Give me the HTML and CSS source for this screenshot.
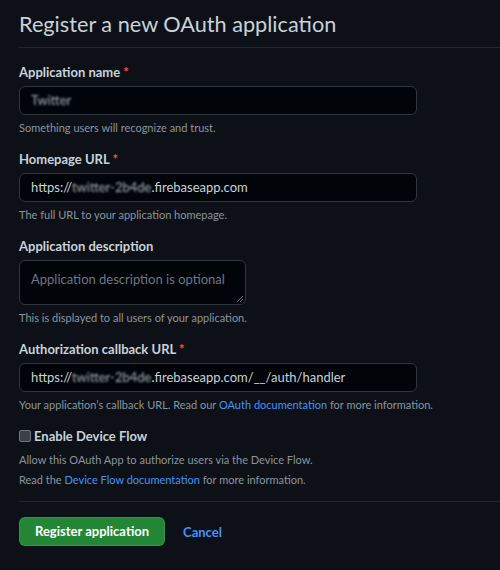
FILE: index.html
```html
<!DOCTYPE html>
<html>
<head>
<meta charset="utf-8">
<link rel="stylesheet" href="styles.css">
</head>
<body>
<div class="page">
  <h1 class="title">Register a new OAuth application</h1>
  <form class="form">
    <div class="group">
      <label class="label">Application name <span class="req">*</span></label>
      <div class="input wide"><span class="blur">Twitter</span></div>
      <p class="note">Something users will recognize and trust.</p>
    </div>
    <div class="group">
      <label class="label">Homepage URL <span class="req">*</span></label>
      <div class="input wide">https://<span class="blur">twitter-2b4de</span>.firebaseapp.com</div>
      <p class="note">The full URL to your application homepage.</p>
    </div>
    <div class="group">
      <label class="label">Application description</label>
      <div class="input textarea"><span class="placeholder">Application description is optional</span><span class="grip"></span></div>
      <p class="note">This is displayed to all users of your application.</p>
    </div>
    <div class="group">
      <label class="label">Authorization callback URL <span class="req">*</span></label>
      <div class="input wide">https://<span class="blur">twitter-2b4de</span>.firebaseapp.com/__/auth/handler</div>
      <p class="note">Your application’s callback URL. Read our <a class="link">OAuth documentation</a> for more information.</p>
    </div>
    <div class="group device">
      <label class="check"><span class="box"></span>Enable Device Flow</label>
      <p class="note first">Allow this OAuth App to authorize users via the Device Flow.</p>
      <p class="note">Read the <a class="link">Device Flow documentation</a> for more information.</p>
    </div>
    <div class="actions">
      <span class="btn">Register application</span>
      <a class="cancel">Cancel</a>
    </div>
  </form>
</div>
</body>
</html>
```

FILE: styles.css
```css
html, body {
  margin: 0;
  padding: 0;
  background: #0d1117;
}
body {
  font-family: Lato, "Noto Sans", sans-serif;
  color: #c9d1d9;
}
.page {
  padding: 8px 0 0 19px;
}
.title {
  margin: 0;
  font-weight: 400;
  font-size: 21.7px;
  line-height: 32px;
  color: #c9d1d9;
  padding-bottom: 7px;
  border-bottom: 1px solid #21262d;
}
.form {
  padding-top: 14px;
}
.group {
  margin-bottom: 13px;
}
.label {
  display: block;
  font-size: 13px;
  font-weight: 700;
  line-height: 20px;
  margin-bottom: 4px;
}
.req {
  color: #f85149;
}
.input {
  box-sizing: border-box;
  background: #010409;
  border: 1px solid #30363d;
  border-radius: 6px;
  font-size: 13px;
  line-height: 20px;
  padding: 3px 11px;
  color: #c9d1d9;
}
.wide {
  width: 398px;
  height: 29px;
}
.textarea {
  width: 227px;
  height: 45px;
  position: relative;
  padding-top: 8px;
  white-space: nowrap;
}
.placeholder {
  color: #6e7681;
}
.grip {
  position: absolute;
  right: 2px;
  bottom: 2px;
  width: 6px;
  height: 6px;
  background: linear-gradient(135deg, transparent 45%, #6e7681 45%, #6e7681 55%, transparent 55%, transparent 70%, #6e7681 70%, #6e7681 80%, transparent 80%);
}
.blur {
  filter: blur(1.2px);
  color: #aab2bb;
}
.note {
  margin: 5px 0 0;
  font-size: 11px;
  line-height: 16px;
  color: #8b949e;
}
.link, .cancel {
  color: #4493f8;
  text-decoration: none;
}
.check {
  display: flex;
  align-items: center;
  font-size: 13px;
  font-weight: 700;
  line-height: 20px;
}
.box {
  box-sizing: border-box;
  width: 12px;
  height: 12px;
  border: 1px solid #6e7681;
  background: #3b4048;
  border-radius: 2px;
  margin-right: 3px;
}
.device .note {
  margin-top: 4px;
}
.device .note.first {
  margin-top: 6px;
}
.actions {
  border-top: 1px solid #21262d;
  padding-top: 15px;
  display: flex;
  align-items: center;
  gap: 18px;
}
.btn {
  box-sizing: border-box;
  height: 29px;
  background: #238636;
  border: 1px solid rgba(240,246,252,0.1);
  color: #ffffff;
  font-size: 13px;
  font-weight: 700;
  line-height: 27px;
  padding: 0 15px;
  border-radius: 6px;
}
.cancel {
  font-size: 13px;
  font-weight: 700;
}
```
